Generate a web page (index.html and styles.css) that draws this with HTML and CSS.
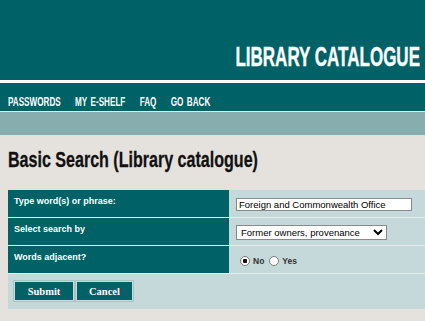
FILE: index.html
```html
<!doctype html>
<html>
<head>
    <title>Library Catalogue</title>
    <link rel="stylesheet" href="styles.css">
</head>
<body>
<header class="masthead">
    <div class="site-title">LIBRARY CATALOGUE</div>
</header>
<nav class="topnav">
    <ul>
        <li><a href="#">PASSWORDS</a></li>
        <li><a href="#">MY E-SHELF</a></li>
        <li><a href="#">FAQ</a></li>
        <li><a href="#">GO BACK</a></li>
    </ul>
</nav>
<div class="band"></div>

<div class="content">
    <h1>Basic Search (Library catalogue)</h1>
    <form>
    <table class="search">
        <tr>
            <td class="label">Type word(s) or phrase:</td>
            <td class="field"><input type="text" class="words" value="Foreign and Commonwealth Office"></td>
        </tr>
        <tr>
            <td class="label">Select search by</td>
            <td class="field">
                <select class="by">
                    <option>Former owners, provenance</option>
                    <option>Title</option>
                    <option>Author</option>
                </select>
            </td>
        </tr>
        <tr>
            <td class="label">Words adjacent?</td>
            <td class="field">
                <div class="radios">
                    <label><input type="radio" name="adj" checked> No</label>
                    <label><input type="radio" name="adj"> Yes</label>
                </div>
            </td>
        </tr>
        <tr>
            <td class="actions" colspan="2">
                <input type="submit" class="btn" value="Submit"><input type="button" class="btn" value="Cancel">
            </td>
        </tr>
    </table>
    </form>
</div>
</body>
</html>
```

FILE: styles.css
```css
body {
    margin: 0;
    background-color: #e5e2dd;
    font-family: "Liberation Sans", Arial, sans-serif;
    overflow: hidden;
}
.masthead {
    background-color: #006166;
    height: 80px;
    border-bottom: 3px solid white;
    display: flex;
    justify-content: flex-end;
    align-items: flex-end;
}
/* no condensed face installed, so squeeze the bold sans */
.site-title {
    font-weight: bold;
    font-size: 27px;
    line-height: 30px;
    color: white;
    margin: 0 5px 8px 0;
    transform: scaleX(0.63);
    transform-origin: right bottom;
    white-space: nowrap;
    -webkit-text-stroke: 0.4px white;
}
.topnav {
    background-color: #006166;
    height: 28px;
    border-bottom: 1px solid #e6eeee;
    padding-left: 8px;
}
.topnav ul {
    margin: 0;
    padding: 9px 0 0 0;
    display: flex;
    gap: 22px;
    list-style: none;
    transform: scaleX(0.65);
    transform-origin: left top;
}
.topnav li a {
    font-weight: bold;
    font-size: 12.5px;
    line-height: 14px;
    color: white;
    text-decoration: none;
    white-space: nowrap;
    word-spacing: 2px;
}
.band {
    background-color: #88adae;
    height: 23px;
}
.content {
    padding-left: 8px;
}
h1 {
    margin: 11.5px 0 18.5px;
    font-size: 22px;
    line-height: 25px;
    color: #111;
    transform: scaleX(0.73);
    transform-origin: left top;
    white-space: nowrap;
    -webkit-text-stroke: 0.3px #111;
}
.search {
    width: 100%;
    border-collapse: separate;
    border-spacing: 0;
}
.search td {
    box-sizing: border-box;
    border-bottom: 1px solid #e4ecec;
    height: 28px;
    padding: 0;
    vertical-align: top;
}
.search .label {
    width: 221px;
    background-color: #006166;
    color: white;
    font-weight: bold;
    font-size: 9px;
    padding: 6px 0 0 6px;
}
.search .field {
    background-color: #c5d9da;
    padding: 7px 0 0 7px;
}
.words {
    display: block;
    width: 176px;
    height: 13px;
    box-sizing: border-box;
    border: 1px solid #8a8a8a;
    padding: 0 2px;
    font-family: "Liberation Sans", Arial, sans-serif;
    font-size: 9.5px;
    margin: 1px 0 0;
}
.by {
    display: block;
    width: 151px;
    height: 15px;
    font-family: "Liberation Sans", Arial, sans-serif;
    font-size: 9.5px;
    padding: 0;
    border: 1px solid #8a8a8a;
    background-color: white;
}
.radios {
    display: flex;
    align-items: center;
    gap: 5px;
    padding: 3px 0 0 4px;
    font-size: 8.5px;
    font-weight: bold;
    color: #333;
}
.radios label {
    display: flex;
    align-items: center;
    gap: 3px;
}
.radios input {
    appearance: none;
    width: 10px;
    height: 10px;
    margin: 0;
    border: 1px solid #7a7a7a;
    border-radius: 50%;
    background-color: white;
}
.radios input:checked {
    background: radial-gradient(circle, #111 0 2px, white 2.5px);
}
.search .actions {
    background-color: #c5d9da;
    height: 35px;
    padding: 7px 0 0 6px;
    border-bottom: none;
}
.btn {
    background-color: #006166;
    color: white;
    border: 1px solid #c5dcdc;
    outline: 1px solid #a8c4c4;
    font-family: "Liberation Serif", Georgia, serif;
    font-weight: bold;
    font-size: 10.5px;
    height: 20px;
    padding: 0;
    margin-right: 2px;
    vertical-align: top;
}
.btn:first-child {
    width: 60px;
}
.btn + .btn {
    width: 57px;
}
```
